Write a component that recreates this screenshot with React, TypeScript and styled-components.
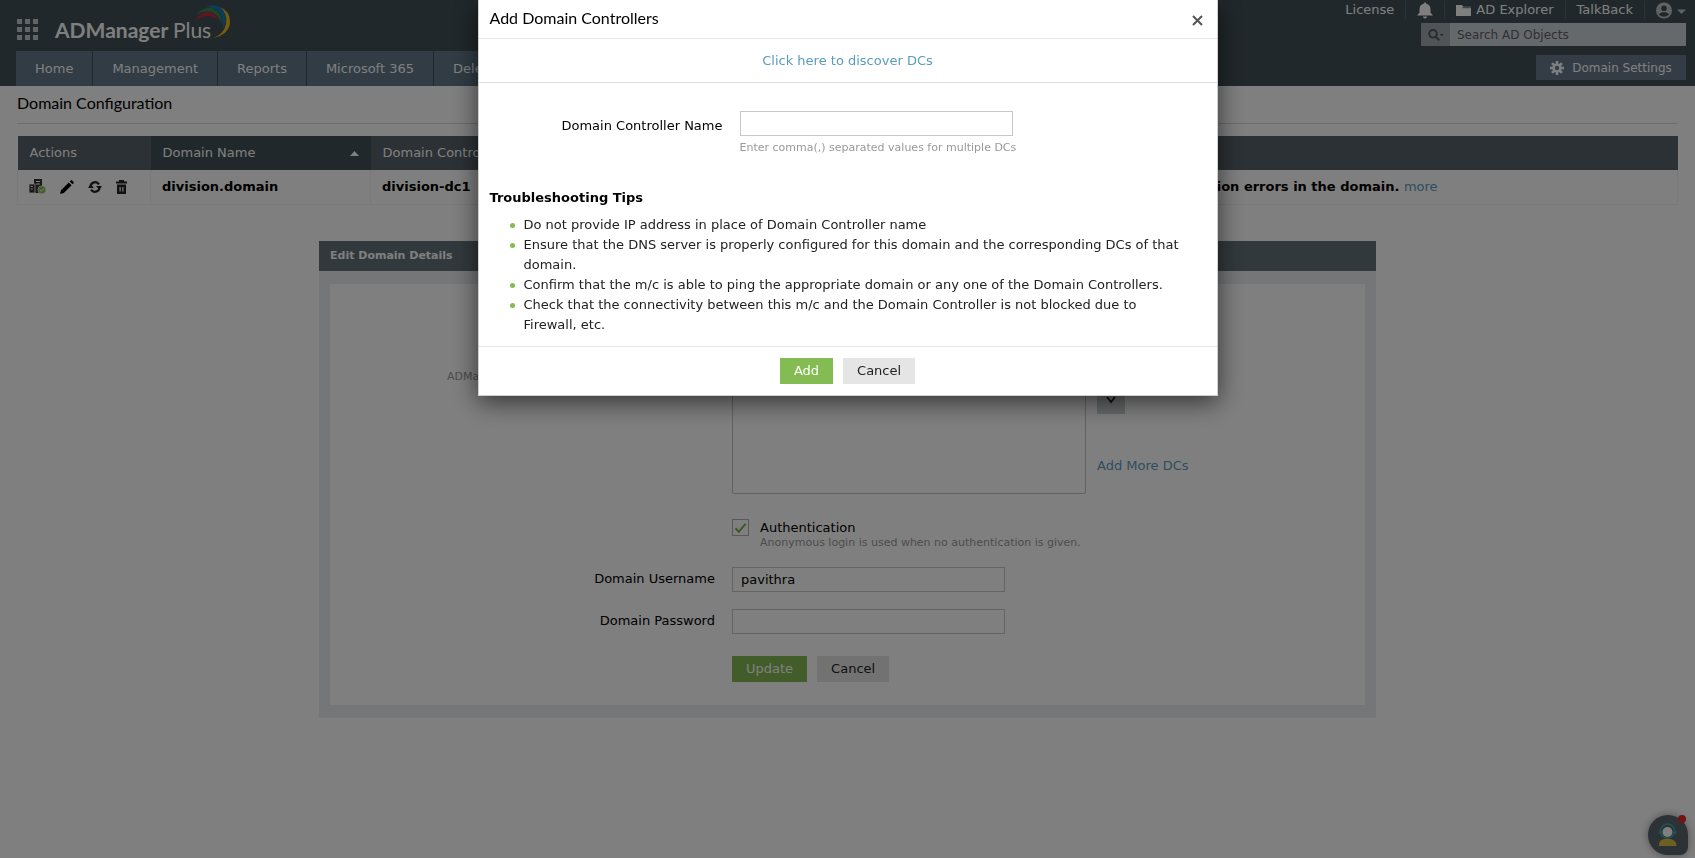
import React, { useState } from 'react';
import styled, { createGlobalStyle } from 'styled-components';

const GlobalStyle = createGlobalStyle`
  * { box-sizing: border-box; }
  body {
    margin: 0;
    background: #fff;
    color: #000;
    font-family: "DejaVu Sans", Verdana, sans-serif;
    font-size: 13px;
    line-height: 20px;
    overflow: hidden;
  }
  button, input, select { font: inherit; color: inherit; margin: 0; }
  button { cursor: pointer; }
`;

const Page = styled.div`
  min-height: 100vh;
`;

/* ---------- header ---------- */

const Header = styled.header`
  display: flex;
  justify-content: space-between;
  height: 86px;
  padding: 0 9px 0 16px;
  background: #425056;
  color: #fff;
`;

const HeaderSide = styled.div<{ $end?: boolean }>`
  display: flex;
  flex-direction: column;
  align-items: ${(p) => (p.$end ? 'flex-end' : 'flex-start')};
`;

const Brand = styled.div`
  display: flex;
  height: 51px;
  gap: 17px;
`;

const AppsButton = styled.button`
  display: flex;
  align-items: flex-start;
  border: 0;
  padding: 19px 0 0 1px;
  background: none;
`;

const Logo = styled.div`
  display: flex;
  padding-top: 4px;
`;

const LogoText = styled.span`
  padding-top: 14px;
  font: 700 21px/24px Lato, sans-serif;
  white-space: nowrap;
`;

const LogoThin = styled.span`
  font-weight: 400;
`;

const LogoArc = styled.svg`
  flex: none;
  margin-left: -17px;
`;

const Tabs = styled.nav`
  display: flex;
  gap: 1px;
`;

const Tab = styled.a`
  height: 35px;
  padding: 0 19px;
  background: #627888;
  color: #fff;
  line-height: 35px;
  text-decoration: none;
  white-space: nowrap;
`;

const TopLinks = styled.div`
  display: flex;
  align-items: center;
  height: 23px;
  padding-bottom: 3px;
`;

const TopLink = styled.a<{ $last?: boolean }>`
  display: flex;
  align-items: center;
  gap: 5px;
  height: 18px;
  padding: 0 ${(p) => (p.$last ? 0 : 11)}px 0 11px;
  border-right: ${(p) => (p.$last ? 0 : 1)}px solid #56646a;
  color: #fff;
  text-decoration: none;
  white-space: nowrap;
`;

const SearchBox = styled.form`
  display: flex;
  width: 265px;
  height: 23px;
`;

const SearchScope = styled.button`
  display: flex;
  align-items: center;
  justify-content: center;
  width: 29px;
  border: 0;
  padding: 0;
  background: #a2a8ac;
`;

const SearchInput = styled.input`
  flex: 1;
  min-width: 0;
  border: 0;
  padding: 0 7px;
  background: #ccd2d6;
  font-size: 12px;
  &::placeholder { color: #5a6266; opacity: 1; }
`;

const SettingsButton = styled.button`
  display: flex;
  align-items: center;
  justify-content: center;
  gap: 8px;
  width: 150px;
  height: 25px;
  margin-top: 9px;
  border: 0;
  padding: 0;
  background: #68788c;
  color: #fff;
  font-size: 12px;
`;

/* ---------- page body ---------- */

const Content = styled.main`
  padding: 0 17px;
`;

const PageTitle = styled.h1`
  height: 38px;
  margin: 0 0 12px;
  border-bottom: 1px solid #d8d8d8;
  font: 400 16px/33px Lato, sans-serif;
`;

const DomainTable = styled.table`
  width: 100%;
  border-collapse: collapse;
  table-layout: fixed;
`;

const HeadCell = styled.th<{ $sorted?: boolean; $width?: number }>`
  width: ${(p) => (p.$width ? `${p.$width}px` : 'auto')};
  height: 34px;
  padding: 0 12px;
  background: ${(p) => (p.$sorted ? '#425056' : '#58626a')};
  color: #fff;
  font-weight: 400;
  text-align: left;
  white-space: nowrap;
`;

const SortLabel = styled.span`
  display: flex;
  align-items: center;
  justify-content: space-between;
`;

const Cell = styled.td`
  height: 34px;
  padding: 0 11px;
  border: 1px solid #f2f2f2;
  border-top: 0;
  font-weight: 700;
  white-space: nowrap;
`;

const StatusCell = styled(Cell)`
  border-left: 0;
`;

const DomainCell = styled(Cell)`
  border-right: 0;
`;

const Actions = styled.div`
  display: flex;
  align-items: center;
  gap: 14px;
`;

const IconButton = styled.button`
  display: flex;
  border: 0;
  padding: 0;
  background: none;
`;

const Link = styled.a`
  color: #5a9cbc;
  font-weight: 400;
  text-decoration: none;
`;

/* ---------- edit panel ---------- */

const Panel = styled.section`
  max-width: 1057px;
  margin: 36px auto 0;
  background: #e8ecf0;
`;

const PanelTitle = styled.h2`
  height: 30px;
  margin: 0;
  padding: 0 11px;
  background: #647278;
  color: #fff;
  font-size: 11px;
  line-height: 29px;
`;

const PanelBody = styled.div`
  padding: 13px 11px;
`;

const Form = styled.form`
  display: grid;
  grid-template-columns: 385px 1fr;
  column-gap: 17px;
  padding: 46px 0 23px;
  background: #fff;
`;

const FieldLabel = styled.label<{ $low?: boolean }>`
  justify-self: end;
  line-height: ${(p) => (p.$low ? 30 : 24)}px;
`;

const Hint = styled.span`
  color: #999;
  font-size: 11px;
  line-height: 14px;
`;

const SideHint = styled(Hint)`
  justify-self: end;
  width: 268px;
  padding-top: 40px;
  white-space: nowrap;
`;

const ListRow = styled.div`
  display: flex;
  gap: 11px;
  margin-bottom: 25px;
`;

const DcList = styled.select`
  width: 354px;
  height: 164px;
  border: 1px solid #c4c4c4;
  background: #fff;
`;

const ListTools = styled.div`
  display: flex;
  flex-direction: column;
  justify-content: space-between;
  align-items: flex-start;
  padding: 56px 0 18px;
`;

const MoveButton = styled.button`
  display: flex;
  align-items: center;
  justify-content: center;
  width: 28px;
  height: 28px;
  border: 0;
  padding: 0;
  background: #ccd0d2;
`;

const CheckRow = styled.div`
  display: flex;
  gap: 11px;
  grid-column: 2;
  margin-bottom: 17px;
`;

const Check = styled.input`
  appearance: none;
  flex: none;
  width: 17px;
  height: 17px;
  border: 1px solid #b0b0b0;
  background: #fff;
  &:checked {
    background: #fff url("data:image/svg+xml,%3Csvg xmlns='http://www.w3.org/2000/svg' viewBox='0 0 15 15'%3E%3Cpath d='M2.5 8.2 5.8 11.8 12.6 3.8' fill='none' stroke='%2379b04a' stroke-width='2'/%3E%3C/svg%3E") center / 15px 15px no-repeat;
  }
`;

const CheckText = styled.div`
  display: flex;
  flex-direction: column;
  line-height: 17px;
`;

const TextField = styled.input`
  width: 273px;
  height: 25px;
  border: 1px solid #c8c8c8;
  padding: 0 8px;
  background: #fff;
`;

const FormField = styled(TextField)`
  margin-bottom: 17px;
`;

const Buttons = styled.div<{ $centered?: boolean }>`
  display: flex;
  gap: 10px;
  grid-column: 2;
  justify-content: ${(p) => (p.$centered ? 'center' : 'flex-start')};
  padding-top: ${(p) => (p.$centered ? 11 : 5)}px;
`;

const Button = styled.button<{ $primary?: boolean }>`
  height: 26px;
  border: 0;
  padding: 0 14px;
  background: ${(p) => (p.$primary ? '#84bb52' : '#e5e5e5')};
  color: ${(p) => (p.$primary ? '#fff' : '#222')};
`;

/* ---------- chat and dialog ---------- */

const ChatButton = styled.button`
  position: fixed;
  right: 7px;
  bottom: 3px;
  width: 40px;
  height: 40px;
  border: 0;
  border-radius: 20px 20px 8px 20px;
  padding: 0;
  background: #58646c;
  box-shadow: 0 0 8px rgba(0, 0, 0, 0.4);
`;

const ChatBadge = styled.span`
  position: absolute;
  top: 0;
  right: 2px;
  width: 8px;
  height: 8px;
  border-radius: 50%;
  background: #e02828;
`;

const Overlay = styled.div`
  position: fixed;
  inset: 0;
  display: flex;
  align-items: flex-start;
  justify-content: center;
  background: rgba(0, 0, 0, 0.5);
`;

const Dialog = styled.section`
  width: 740px;
  padding-bottom: 11px;
  border: 1px solid #d0d0d0;
  border-top: 0;
  background: #fff;
  box-shadow: 0 6px 24px rgba(0, 0, 0, 0.6);
`;

const DialogHead = styled.header`
  display: flex;
  align-items: flex-start;
  justify-content: space-between;
  height: 39px;
  padding: 0 12px 0 11px;
  border-bottom: 1px solid #e6e6e6;
`;

const DialogTitle = styled.h2`
  margin: 0;
  font: 400 16px/36px Lato, sans-serif;
`;

const CloseButton = styled(IconButton)`
  padding-top: 12px;
`;

const DiscoverBar = styled.div`
  height: 44px;
  border-bottom: 1px solid #e0e0e0;
  line-height: 44px;
  text-align: center;
`;

const DialogField = styled.div`
  display: grid;
  grid-template-columns: 244px 1fr;
  grid-template-rows: 25px 14px;
  column-gap: 17px;
  row-gap: 5px;
  padding: 28px 0 33px;
`;

const DialogHint = styled(Hint)`
  grid-column: 2;
`;

const TipsTitle = styled.h3`
  margin: 0 11px;
  font-size: 13px;
`;

const Tips = styled.ul`
  margin: 7px 28px 11px 45px;
  padding: 0;
  list-style: none;
`;

const Tip = styled.li`
  display: flex;
  gap: 9px;
  color: #222;
  &::before {
    content: "";
    flex: none;
    width: 5px;
    height: 5px;
    margin: 8px 0 0 -14px;
    border-radius: 50%;
    background: #84bb52;
  }
`;

const DialogFoot = styled.footer`
  border-top: 1px solid #e6e6e6;
`;

const tips = [
  'Do not provide IP address in place of Domain Controller name',
  'Ensure that the DNS server is properly configured for this domain and the corresponding DCs of that domain.',
  'Confirm that the m/c is able to ping the appropriate domain or any one of the Domain Controllers.',
  'Check that the connectivity between this m/c and the Domain Controller is not blocked due to Firewall, etc.',
];

const tabs = ['Home', 'Management', 'Reports', 'Microsoft 365', 'Delegation'];

/* ---------- icons ---------- */

const AppsIcon = () => (
  <svg width="21" height="21" fill="#c4c8ca">
    {[0, 8, 16].flatMap((y) => [0, 8, 16].map((x) => <rect key={`${x}-${y}`} x={x} y={y} width="5" height="5" />))}
  </svg>
);

const BellIcon = () => (
  <svg width="16" height="17" viewBox="0 0 16 17" fill="#fff">
    <path d="M8 0.5a1.3 1.3 0 0 1 1.3 1.3C12 2.4 13.500 4.400 13.500 7v3.500L16 13.500H0L2.500 10.500V7C2.500 4.400 4 2.400 6.700 1.800A1.300 1.300 0 0 1 8 0.500ZM6 14.500h4a2 2 0 0 1-4 0Z" />
  </svg>
);

const FolderIcon = () => (
  <svg width="15" height="11" viewBox="0 0 15 11" fill="#fff">
    <path d="M0 0h6l1.500 1.800H15V11H0Z" />
    <path d="M6.500 2.700H15" stroke="#425056" strokeWidth=".8" />
  </svg>
);

const UserIcon = () => (
  <svg width="30" height="17" viewBox="0 0 30 17">
    <circle cx="8" cy="8.500" r="8" fill="#c0c4c6" />
    <circle cx="8" cy="6.300" r="2.800" fill="#425056" />
    <path d="M2.800 12.500C4 10.600 6 10.200 8 10.200s4 .4 5.200 2.300A7 7 0 0 1 2.800 12.500Z" fill="#425056" />
    <path d="M21 7.500h9l-4.500 4.500Z" fill="#c0c4c6" />
  </svg>
);

const SearchIcon = () => (
  <svg width="16" height="12" viewBox="0 0 16 12">
    <circle cx="5" cy="4.800" r="3.800" fill="none" stroke="#50585c" strokeWidth="2" />
    <path d="m7.800 7.800 3.400 3.400" stroke="#50585c" strokeWidth="2.200" />
    <path d="M11.500 5H16l-2.200 2.200Z" fill="#50585c" />
  </svg>
);

const GearIcon = () => (
  <svg width="14" height="14" viewBox="-7 -7 14 14">
    {[0, 45, 90, 135].map((a) => (
      <rect key={a} x="-1.300" y="-7" width="2.600" height="14" transform={`rotate(${a})`} fill="#fff" />
    ))}
    <circle r="4.600" fill="#fff" />
    <circle r="2.200" fill="#68788c" />
  </svg>
);

const ServerIcon = () => (
  <svg width="17" height="15" viewBox="0 0 17 15">
    <path d="M5 0h8v14H5Z" fill="#333" />
    <path d="M0 5h6v9H0Z" fill="#333" stroke="#fff" strokeWidth=".8" />
    <path d="M7 2.500h4M7 5h4M1.800 7.500h2M1.800 10h2" stroke="#fff" strokeWidth="1.200" />
    <circle cx="12.800" cy="10.800" r="4" fill="#84bb52" stroke="#fff" strokeWidth=".6" />
    <path d="m10.900 10.800 1.500 1.500 2.500-2.700" fill="none" stroke="#fff" />
  </svg>
);

const PencilIcon = () => (
  <svg width="14" height="14" viewBox="0 0 14 14" fill="#000">
    <path d="M0 14 1 10.200 8.800 2.400l2.800 2.800L3.800 13ZM9.700 1.500 10.800.4q.6-.6 1.300 0l1.500 1.500q.6.700 0 1.300L12.500 4.300Z" />
  </svg>
);

const RefreshIcon = () => (
  <svg width="14" height="14" viewBox="0 0 14 14">
    <path d="M2.500 6A4.700 4.700 0 0 1 11 4.300M11.500 8A4.700 4.700 0 0 1 3 9.700" fill="none" stroke="#222" strokeWidth="2.200" />
    <path d="M8 6H14L11.400 9.800ZM0 8h6L2.600 4.200Z" fill="#222" />
  </svg>
);

const TrashIcon = () => (
  <svg width="11" height="14" viewBox="0 0 11 14" fill="#222">
    <path d="M3 0h5v1.500H11v2H0v-2h3ZM1 4.500h9V14H1Z" />
    <path d="M3.500 7v4.500h1.200V7ZM6.300 7v4.500h1.200V7Z" fill="#fff" />
  </svg>
);

const ChatFace = () => (
  <svg width="40" height="40" viewBox="0 0 40 40">
    <path d="M11 31q-1-7 8-7.500 10 .5 9.500 7.500Z" fill="#dcc040" />
    <circle cx="19.500" cy="16" r="7" fill="none" stroke="#38a8b0" strokeWidth="1.500" />
    <circle cx="19.500" cy="17" r="5" fill="#fff" />
    <path d="M11.800 16v3M27.200 16v3" stroke="#38a8b0" strokeWidth="2" />
  </svg>
);

export default function App() {
  const [name, setName] = useState('');
  const [user, setUser] = useState('pavithra');
  const [password, setPassword] = useState('');
  const [auth, setAuth] = useState(true);

  return (
    <Page>
      <GlobalStyle />
      <Header>
        <HeaderSide>
          <Brand>
            <AppsButton aria-label="Apps"><AppsIcon /></AppsButton>
            <Logo>
              <LogoText>ADManager <LogoThin>Plus</LogoThin></LogoText>
              <LogoArc width="38" height="38" viewBox="0 0 38 38" fill="none">
                <path d="M1 18Q5 8 14 8Q22 9 25 17Q20 12 13 12Q6 12 1 18Z" fill="#c02848" />
                <path d="M2 11Q10 2 18 4Q28 8 28 20Q24 10 17 8Q9 6 2 11Z" fill="#3c8848" />
                <path d="M11 3Q23-2 30 7Q34 13 29 25Q29 13 25 8Q20 3 11 3Z" fill="#1878b0" />
                <path d="M26 3Q36 7 36 18Q35 31 19 34Q30 30 32 20Q34 9 26 3Z" fill="#e8b820" />
              </LogoArc>
            </Logo>
          </Brand>
          <Tabs>
            {tabs.map((tab) => <Tab key={tab} href="#">{tab}</Tab>)}
          </Tabs>
        </HeaderSide>
        <HeaderSide $end>
          <TopLinks>
            <TopLink href="#">License</TopLink>
            <TopLink href="#" aria-label="Notifications"><BellIcon /></TopLink>
            <TopLink href="#"><FolderIcon />AD Explorer</TopLink>
            <TopLink href="#">TalkBack</TopLink>
            <TopLink href="#" aria-label="Account" $last><UserIcon /></TopLink>
          </TopLinks>
          <SearchBox>
            <SearchScope type="button" aria-label="Search scope"><SearchIcon /></SearchScope>
            <SearchInput placeholder="Search AD Objects" aria-label="Search AD Objects" />
          </SearchBox>
          <SettingsButton><GearIcon />Domain Settings</SettingsButton>
        </HeaderSide>
      </Header>

      <Content>
        <PageTitle>Domain Configuration</PageTitle>
        <DomainTable>
          <thead>
            <tr>
              <HeadCell $width={133}>Actions</HeadCell>
              <HeadCell $width={220} $sorted>
                <SortLabel>
                  Domain Name
                  <svg width="9" height="5" fill="#fff"><path d="M0 5 4.500 0 9 5Z" /></svg>
                </SortLabel>
              </HeadCell>
              <HeadCell>Domain Controllers</HeadCell>
              <HeadCell $width={558}>Status</HeadCell>
            </tr>
          </thead>
          <tbody>
            <tr>
              <Cell>
                <Actions>
                  <IconButton aria-label="Domain status"><ServerIcon /></IconButton>
                  <IconButton aria-label="Edit"><PencilIcon /></IconButton>
                  <IconButton aria-label="Refresh"><RefreshIcon /></IconButton>
                  <IconButton aria-label="Delete"><TrashIcon /></IconButton>
                </Actions>
              </Cell>
              <Cell>division.domain</Cell>
              <DomainCell>division-dc1</DomainCell>
              <StatusCell>Authentication errors in the domain. <Link href="#">more</Link></StatusCell>
            </tr>
          </tbody>
        </DomainTable>

        <Panel>
          <PanelTitle>Edit Domain Details</PanelTitle>
          <PanelBody>
            <Form>
              <SideHint>ADManager Plus uses the DCs in this order</SideHint>
              <ListRow>
                <DcList size={8} aria-label="Domain Controllers" />
                <ListTools>
                  <MoveButton type="button" aria-label="Move down">
                    <svg width="10" height="8"><path d="m1 1 4 5 4-5" fill="none" stroke="#222" strokeWidth="2" /></svg>
                  </MoveButton>
                  <Link href="#">Add More DCs</Link>
                </ListTools>
              </ListRow>
              <CheckRow>
                <Check id="auth" type="checkbox" checked={auth} onChange={(e) => setAuth(e.target.checked)} />
                <CheckText>
                  <label htmlFor="auth">Authentication</label>
                  <Hint>Anonymous login is used when no authentication is given.</Hint>
                </CheckText>
              </CheckRow>
              <FieldLabel htmlFor="user">Domain Username</FieldLabel>
              <FormField id="user" value={user} onChange={(e) => setUser(e.target.value)} />
              <FieldLabel htmlFor="password">Domain Password</FieldLabel>
              <FormField id="password" type="password" value={password} onChange={(e) => setPassword(e.target.value)} />
              <Buttons>
                <Button type="button" $primary>Update</Button>
                <Button type="button">Cancel</Button>
              </Buttons>
            </Form>
          </PanelBody>
        </Panel>
      </Content>

      <ChatButton aria-label="Chat"><ChatFace /><ChatBadge /></ChatButton>

      <Overlay>
        <Dialog role="dialog" aria-labelledby="dialog-title">
          <DialogHead>
            <DialogTitle id="dialog-title">Add Domain Controllers</DialogTitle>
            <CloseButton aria-label="Close">
              <svg width="14" height="14"><path d="m2 4 9 9M11 4 2 13" stroke="#555" strokeWidth="2" /></svg>
            </CloseButton>
          </DialogHead>
          <DiscoverBar><Link href="#">Click here to discover DCs</Link></DiscoverBar>
          <DialogField>
            <FieldLabel htmlFor="dc-name" $low>Domain Controller Name</FieldLabel>
            <TextField id="dc-name" value={name} onChange={(e) => setName(e.target.value)} />
            <DialogHint>Enter comma(,) separated values for multiple DCs</DialogHint>
          </DialogField>
          <TipsTitle>Troubleshooting Tips</TipsTitle>
          <Tips>{tips.map((tip) => <Tip key={tip}>{tip}</Tip>)}</Tips>
          <DialogFoot>
            <Buttons $centered>
              <Button type="button" $primary>Add</Button>
              <Button type="button">Cancel</Button>
            </Buttons>
          </DialogFoot>
        </Dialog>
      </Overlay>
    </Page>
  );
}
